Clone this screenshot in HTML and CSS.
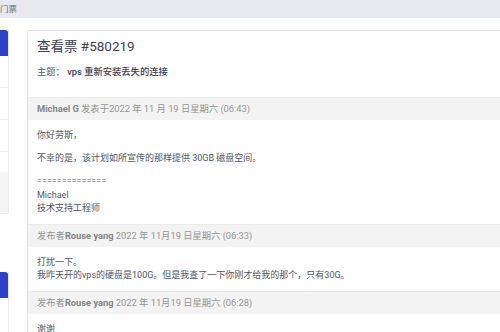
FILE: index.html
```html
<!DOCTYPE html>
<html lang="zh-CN">
<head>
  <meta charset="UTF-8">
  <meta name="viewport" content="width=device-width, initial-scale=1">
  <title>查看票 #580219</title>
  <link rel="stylesheet" href="styles.css">
</head>
<body>
  <div class="topbar">门票</div>

  <div class="page">
    <aside class="sidebar">
      <div class="side-card">
        <div class="side-head"></div>
        <div class="side-row"></div>
        <div class="side-row"></div>
        <div class="side-row"></div>
        <div class="side-row short"></div>
        <div class="side-foot"></div>
      </div>
      <div class="side-card second">
        <div class="side-head"></div>
        <div class="side-row"></div>
      </div>
    </aside>

    <main class="ticket">
      <div class="ticket-head">
        <h1>查看票 #580219</h1>
        <p class="subject">主题： <strong>vps 重新安装丢失的连接</strong></p>
      </div>

      <div class="reply">
        <div class="reply-meta"><strong>Michael G</strong> 发表于2022 年 11 月 19 日星期六 (06:43)</div>
        <div class="reply-body">
          <p>你好劳斯，</p>
          <p>不幸的是，该计划如所宣传的那样提供 30GB 磁盘空间。</p>
          <p>==============<br>Michael<br>技术支持工程师</p>
        </div>
      </div>

      <div class="reply">
        <div class="reply-meta">发布者<strong>Rouse yang</strong> 2022 年 11月19 日星期六 (06:33)</div>
        <div class="reply-body">
          <p>打扰一下。<br>我昨天开的vps的硬盘是100G。但是我查了一下你刚才给我的那个，只有30G。</p>
        </div>
      </div>

      <div class="reply">
        <div class="reply-meta">发布者<strong>Rouse yang</strong> 2022 年 11月19 日星期六 (06:28)</div>
        <div class="reply-body">
          <p>谢谢</p>
        </div>
      </div>
    </main>
  </div>
</body>
</html>
```

FILE: styles.css
```css
* {
  margin: 0;
  padding: 0;
  box-sizing: border-box;
}

body {
  font-family: Roboto, "Noto Sans CJK SC", sans-serif;
  background-color: #FFFFFF;
  color: #555a68;
  font-size: 9px;
  overflow: hidden;
}

.topbar {
  height: 18px;
  background-color: #e6e9ed;
  color: #6b6f78;
  font-size: 8.5px;
  line-height: 18px;
  white-space: nowrap;
}

.page {
  display: flex;
  gap: 18px;
  padding-top: 12px;
}

/* barra lateral recortada */
.sidebar {
  flex: 0 0 9px;
  display: flex;
  flex-direction: column;
  gap: 58px;
}

.side-card {
  border: 1px solid #ececec;
  border-left: none;
  border-top: none;
  background-color: #FFFFFF;
}

.side-head {
  height: 26px;
  background-color: #2e41c9;
  border-radius: 0 3px 0 0;
}

.side-row {
  height: 32px;
  border-bottom: 1px solid #ececec;
}

.side-row.short {
  height: 20px;
  border-bottom: none;
}

.side-foot {
  height: 41px;
  background-color: #f5f5f5;
}

.side-card.second .side-row {
  height: 40px;
  border-bottom: none;
}

.ticket {
  flex: 1;
  min-width: 560px;
  border: 1px solid #e4e4e4;
  border-radius: 3px;
  background-color: #FFFFFF;
}

.ticket-head {
  padding: 7px 9px 18px;
}

h1 {
  font-size: 13.5px;
  font-weight: 400;
  color: #3d4256;
  line-height: 17px;
  margin-bottom: 10px;
}

.subject {
  font-size: 9.3px;
  line-height: 14px;
  color: #5a5f6e;
}

.subject strong {
  font-weight: 500;
  color: #3d4256;
}

.reply-meta {
  background-color: #f3f3f3;
  border-top: 1px solid #ebebeb;
  height: 23px;
  line-height: 22px;
  padding: 0 9px;
  font-size: 9.3px;
  color: #959595;
}

.reply-meta strong {
  color: #858585;
}

.reply-body {
  padding: 9px 9px 8px;
  line-height: 13.5px;
  color: #52576a;
}

.reply-body p + p {
  margin-top: 9.5px;
}
```
